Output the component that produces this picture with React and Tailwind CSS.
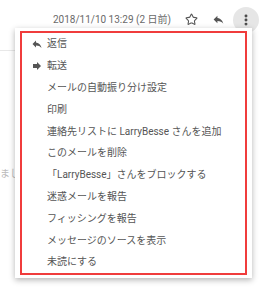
import { Star, MoreVertical } from "lucide-react";

const ReplyIcon = ({ className }) => (
  <svg viewBox="0 0 24 24" className={className} fill="currentColor">
    <path d="M10 9V5l-7 7 7 7v-4.1c5 0 8.5 1.6 11 5.1-1-5-4-10-11-11z" />
  </svg>
);

const ForwardIcon = ({ className }) => (
  <svg viewBox="0 0 24 24" className={className} fill="currentColor">
    <path d="M12 8V4l8 8-8 8v-4H4V8z" />
  </svg>
);

const items = [
  { label: "返信", icon: "reply" },
  { label: "転送", icon: "forward" },
  { label: "メールの自動振り分け設定" },
  { label: "印刷" },
  { label: "連絡先リストに LarryBesse さんを追加" },
  { label: "このメールを削除" },
  { label: "「LarryBesse」さんをブロックする" },
  { label: "迷惑メールを報告" },
  { label: "フィッシングを報告" },
  { label: "メッセージのソースを表示" },
  { label: "未読にする" },
];

const App = () => {
  return (
    <div
      className="relative h-[300px] w-[263px] overflow-hidden bg-white text-[#555]"
      style={{ fontFamily: 'Roboto, "Noto Sans CJK JP", sans-serif' }}
    >
      <div className="flex h-[40px] items-start justify-end pr-[4px] pt-[7px]">
        <span className="mt-[6px] text-[10px] leading-[13px] text-[#6a6a6a]">
          2018/11/10 13:29 (2 日前)
        </span>
        <Star className="ml-[14px] mt-[6px] h-[13px] w-[13px] text-[#555]" strokeWidth={2} />
        <ReplyIcon className="ml-[14px] mt-[6px] h-[13px] w-[13px] text-[#555]" />
        <div className="ml-[8px] flex h-[26px] w-[26px] items-center justify-center rounded-full bg-[#e6e6e6]">
          <MoreVertical className="h-[14px] w-[14px] text-[#444]" strokeWidth={3} />
        </div>
      </div>
      <div className="mt-[10px] h-px w-[15px] bg-[#e8e8e8]" />
      <div className="mt-[116px] text-[10px] leading-[13px] text-[#bbb]">まし</div>

      <div className="absolute left-[15px] top-[28px] w-[237px] bg-white py-[3px] px-[5px] shadow-[0_2px_6px_rgba(0,0,0,0.3)]">
        <div className="border-2 border-[#f03c3c]">
          {items.map((item) => (
            <div key={item.label} className="flex h-[21.8px] items-center text-[10px]">
              <div className="flex w-[25px] justify-center pl-[4px]">
                {item.icon === "reply" && <ReplyIcon className="h-[12px] w-[12px] text-[#555]" />}
                {item.icon === "forward" && <ForwardIcon className="h-[12px] w-[12px] text-[#555]" />}
              </div>
              <span className="whitespace-nowrap">{item.label}</span>
            </div>
          ))}
        </div>
      </div>
    </div>
  );
};

export default App;
